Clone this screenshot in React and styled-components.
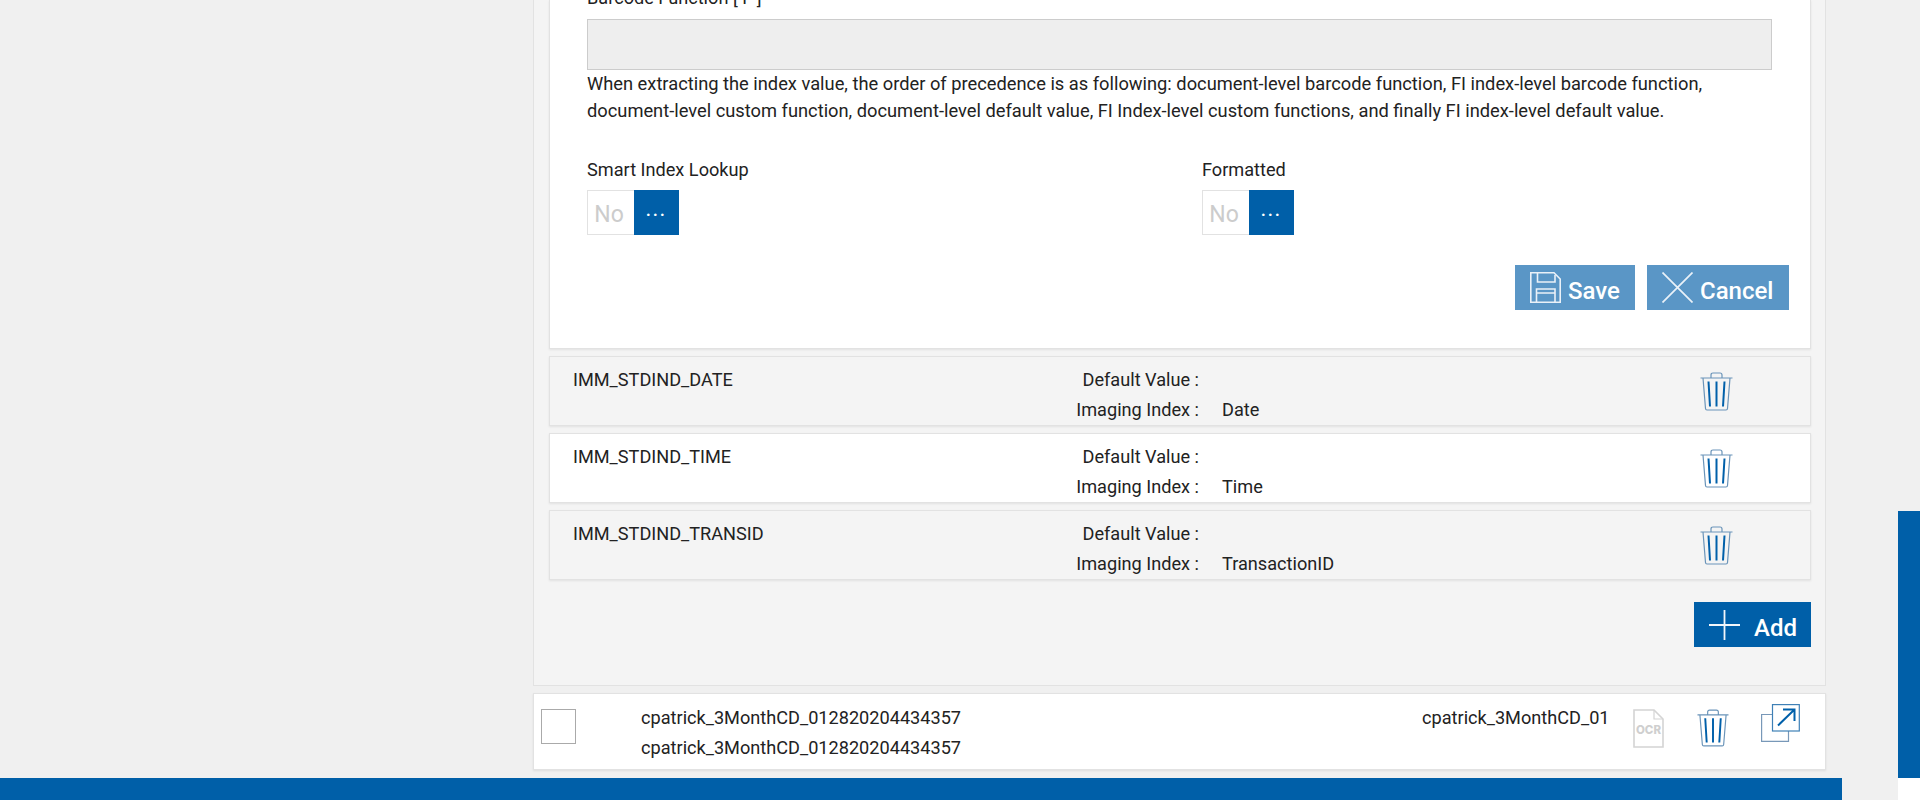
import React from "react";
import styled, { createGlobalStyle } from "styled-components";

const Global = createGlobalStyle`
  html, body { margin: 0; padding: 0; background: #f0f0f0; }
  body { font-family: Roboto, "Liberation Sans", sans-serif; color: #222; font-size: 18.15px; }
`;

const Viewport = styled.div`
  position: relative;
  width: 1920px;
  height: 800px;
  overflow: hidden;
  padding-left: 533px;
  box-sizing: border-box;
`;
const Column = styled.div`
  width: 1293px;
  display: flex;
  flex-direction: column;
`;
const Panel = styled.section`
  box-sizing: border-box;
  height: 686px;
  background: #f4f4f4;
  border: 1px solid #e2e2e2;
  border-top: 0;
  padding: 0 14px 0 15px;
  display: flex;
  flex-direction: column;
`;
const Card = styled.div`
  box-sizing: border-box;
  height: 349px;
  background: #fff;
  border: 1px solid #e2e2e2;
  border-top: 0;
  box-shadow: 0 1px 2px rgba(0,0,0,.08);
  padding: 0 21px 0 37px;
  display: flex;
  flex-direction: column;
`;
const FieldLabel = styled.label`
  display: block;
  line-height: 24px;
  margin-top: -14px;
  margin-bottom: 9px;
`;
const Input = styled.div`
  box-sizing: border-box;
  height: 51px;
  width: 1185px;
  background: #eee;
  border: 1px solid #ccc;
`;
const Help = styled.p`
  margin: 0;
  width: 1185px;
  font-size: 18.3px;
  line-height: 27px;
`;
const ToggleRow = styled.div`
  display: grid;
  grid-template-columns: 615px 1fr;
  margin-top: 34px;
`;
const ToggleField = styled.div`
  display: flex;
  flex-direction: column;
  gap: 8px;
`;
const ToggleLabel = styled.span`
  line-height: 24px;
`;
const Toggle = styled.div`
  box-sizing: border-box;
  display: flex;
  width: 92px;
  height: 45px;
  border: 1px solid #e2e2e2;
  border-right: 0;
`;
const ToggleOff = styled.span`
  flex: 1;
  padding-right: 4px;
  text-align: center;
  color: #ccc;
  font-size: 23px;
  line-height: 47px;
`;
const ToggleKnob = styled.span`
  width: 45px;
  margin: -1px 0;
  background: #005fa8;
  color: #fff;
  text-align: center;
  font-size: 16px;
  font-weight: 700;
  letter-spacing: 2.4px;
  line-height: 41px;
`;
const Actions = styled.div`
  display: flex;
  justify-content: flex-end;
  gap: 12px;
  margin-top: 30px;
`;
const ActionButton = styled.button`
  box-sizing: border-box;
  display: flex;
  align-items: center;
  height: 45px;
  border: 0;
  padding: 0 0 0 ${p => p.$pad}px;
  width: ${p => p.$w}px;
  gap: ${p => p.$gap}px;
  background: ${p => (p.$solid ? "#005fa8" : "#5a96c6")};
  color: #fff;
  font: 500 24px/1 Roboto, sans-serif;
`;
const ButtonText = styled.span`
  padding-top: 6px;
`;
const Row = styled.div`
  box-sizing: border-box;
  height: 70px;
  margin-top: 7px;
  background: ${p => (p.$alt ? "#f4f4f4" : "#fff")};
  border: 1px solid #e2e2e2;
  box-shadow: 0 1px 2px rgba(0,0,0,.08);
  padding: 8px 0 0 23px;
  display: grid;
  grid-template-columns: 328px 298px 23px 478px 33px;
  grid-template-rows: 30px 30px;
  line-height: 30px;
`;
const RowName = styled.div`
  grid-column: 1;
  grid-row: 1;
`;
const RowKey = styled.div`
  grid-column: 2;
  grid-row: ${p => p.$line};
  text-align: right;
`;
const RowValue = styled.div`
  grid-column: 4;
  grid-row: 2;
`;
const RowTrash = styled.div`
  grid-column: 5;
  grid-row: 1 / 3;
  padding-top: 7px;
  line-height: 0;
`;
const AddBar = styled.div`
  display: flex;
  justify-content: flex-end;
  margin-top: 22px;
`;
const FileRow = styled.div`
  box-sizing: border-box;
  margin-top: 7px;
  height: 77px;
  background: #fff;
  border: 1px solid #e2e2e2;
  box-shadow: 0 1px 2px rgba(0,0,0,.08);
  padding: 9px 0 0 7px;
  display: grid;
  grid-template-columns: 35px 65px 781px 211px 64px 64px 38px;
  grid-template-rows: 30px 30px;
  line-height: 30px;
`;
const Check = styled.div`
  grid-column: 1;
  grid-row: 1 / 3;
  box-sizing: border-box;
  width: 35px;
  height: 35px;
  margin-top: 6px;
  border: 1px solid #aaa;
  background: #fff;
`;
const FileName = styled.div`
  grid-column: 3;
  grid-row: ${p => p.$line};
`;
const FileShort = styled.div`
  grid-column: 4;
  grid-row: 1;
  width: 185px;
  overflow: hidden;
  white-space: nowrap;
`;
const FileIcon = styled.div`
  grid-column: ${p => p.$col};
  grid-row: 1 / 3;
  line-height: 0;
  padding-top: ${p => p.$top}px;
`;
const BottomBar = styled.div`
  position: absolute;
  left: 0;
  top: 778px;
  width: 1842px;
  height: 22px;
  background: #005fa8;
`;
const ScrollTrack = styled.div`
  position: absolute;
  right: 0;
  top: 511px;
  width: 22px;
  height: 289px;
  background: linear-gradient(#005fa8 267px, #fff 267px);
`;

const Trash = ({ w = 33, h = 39 }) => (
  <svg width={w} height={h} viewBox="0 0 33 39" fill="none">
    <path d="M0.5 6H32.5M11 6V3Q11 1 13 1H20Q22 1 22 3V6M3 6L5.5 36.5Q5.6 38 7 38H26Q27.4 38 27.5 36.5L30 6" stroke="#6a94b9" strokeWidth="1.2" />
    <path d="M8.5 9.5L10 34.5M16.5 9.5V34.5M24.5 9.5L23 34.5" stroke="#0060aa" strokeWidth="2" />
  </svg>
);
const Floppy = () => (
  <svg width="31" height="31" viewBox="0 0 31 31" fill="none" stroke="#eaf1f8" strokeWidth="1.6">
    <path d="M.8.8H24L30.2 7V30.2H.8Z" />
    <path d="M7.5.8V10H25V3" />
    <path d="M6.5 30.2V17H25V30.2M6.5 21H25" />
  </svg>
);
const Cross = () => (
  <svg width="31" height="31" viewBox="0 0 31 31" fill="none" stroke="#eaf1f8" strokeWidth="1.7">
    <path d="M.5.5L30.5 30.5M30.5.5L.5 30.5" />
  </svg>
);
const Plus = () => (
  <svg width="31" height="30" viewBox="0 0 31 30" fill="none" stroke="#f2f6fa" strokeWidth="1.8">
    <path d="M15.5 0V30M0 15H31" />
  </svg>
);
const Ocr = () => (
  <svg width="31" height="39" viewBox="0 0 31 39" fill="none">
    <path d="M1 1H21L30 10V38H1Z" stroke="#d4d4d4" strokeWidth="1.6" />
    <path d="M21 1V10H30" stroke="#d4d4d4" strokeWidth="1.2" />
    <text x="15.5" y="25" textAnchor="middle" fontFamily="Inter, sans-serif" fontWeight="800" fontSize="11.5" fill="#cfcfcf">OCR</text>
  </svg>
);
const Popout = () => (
  <svg width="39" height="38" viewBox="0 0 39 38" fill="none">
    <path d="M11 10.5H.6V37.4H27.5V27" stroke="#7898b8" strokeWidth="1.2" />
    <rect x="11.5" y=".6" width="26.8" height="26.4" stroke="#3f80b6" strokeWidth="1.2" fill="#fff" />
    <path d="M17 21.5L33 6M22 5.5H33.5V17" stroke="#0060aa" strokeWidth="2" />
  </svg>
);

const rows = [
  ["IMM_STDIND_DATE", "Date", true],
  ["IMM_STDIND_TIME", "Time", false],
  ["IMM_STDIND_TRANSID", "TransactionID", true],
];

export default function App() {
  return (
    <Viewport>
      <Global />
      <Column>
        <Panel>
          <Card>
            <FieldLabel>Barcode Function [ F ]</FieldLabel>
            <Input />
            <Help>
              When extracting the index value, the order of precedence is as following: document-level barcode function, FI index-level barcode function, document-level custom function, document-level default value, FI Index-level custom functions, and finally FI index-level default value.
            </Help>
            <ToggleRow>
              <ToggleField>
                <ToggleLabel>Smart Index Lookup</ToggleLabel>
                <Toggle><ToggleOff>No</ToggleOff><ToggleKnob>...</ToggleKnob></Toggle>
              </ToggleField>
              <ToggleField>
                <ToggleLabel>Formatted</ToggleLabel>
                <Toggle><ToggleOff>No</ToggleOff><ToggleKnob>...</ToggleKnob></Toggle>
              </ToggleField>
            </ToggleRow>
            <Actions>
              <ActionButton $w={120} $pad={15} $gap={7}><Floppy /><ButtonText>Save</ButtonText></ActionButton>
              <ActionButton $w={142} $pad={15} $gap={7}><Cross /><ButtonText>Cancel</ButtonText></ActionButton>
            </Actions>
          </Card>
          {rows.map(([name, value, alt]) => (
            <Row key={name} $alt={alt}>
              <RowName>{name}</RowName>
              <RowKey $line={1}>Default Value :</RowKey>
              <RowKey $line={2}>Imaging Index :</RowKey>
              <RowValue>{value}</RowValue>
              <RowTrash><Trash /></RowTrash>
            </Row>
          ))}
          <AddBar>
            <ActionButton $solid $w={117} $pad={15} $gap={14}><Plus /><ButtonText>Add</ButtonText></ActionButton>
          </AddBar>
        </Panel>
        <FileRow>
          <Check />
          <FileName $line={1}>cpatrick_3MonthCD_012820204434357</FileName>
          <FileName $line={2}>cpatrick_3MonthCD_012820204434357</FileName>
          <FileShort>cpatrick_3MonthCD_012820204434357</FileShort>
          <FileIcon $col={5} $top={6}><Ocr /></FileIcon>
          <FileIcon $col={6} $top={6}><Trash w={32} h={38} /></FileIcon>
          <FileIcon $col={7} $top={1}><Popout /></FileIcon>
        </FileRow>
      </Column>
      <BottomBar />
      <ScrollTrack />
    </Viewport>
  );
}
